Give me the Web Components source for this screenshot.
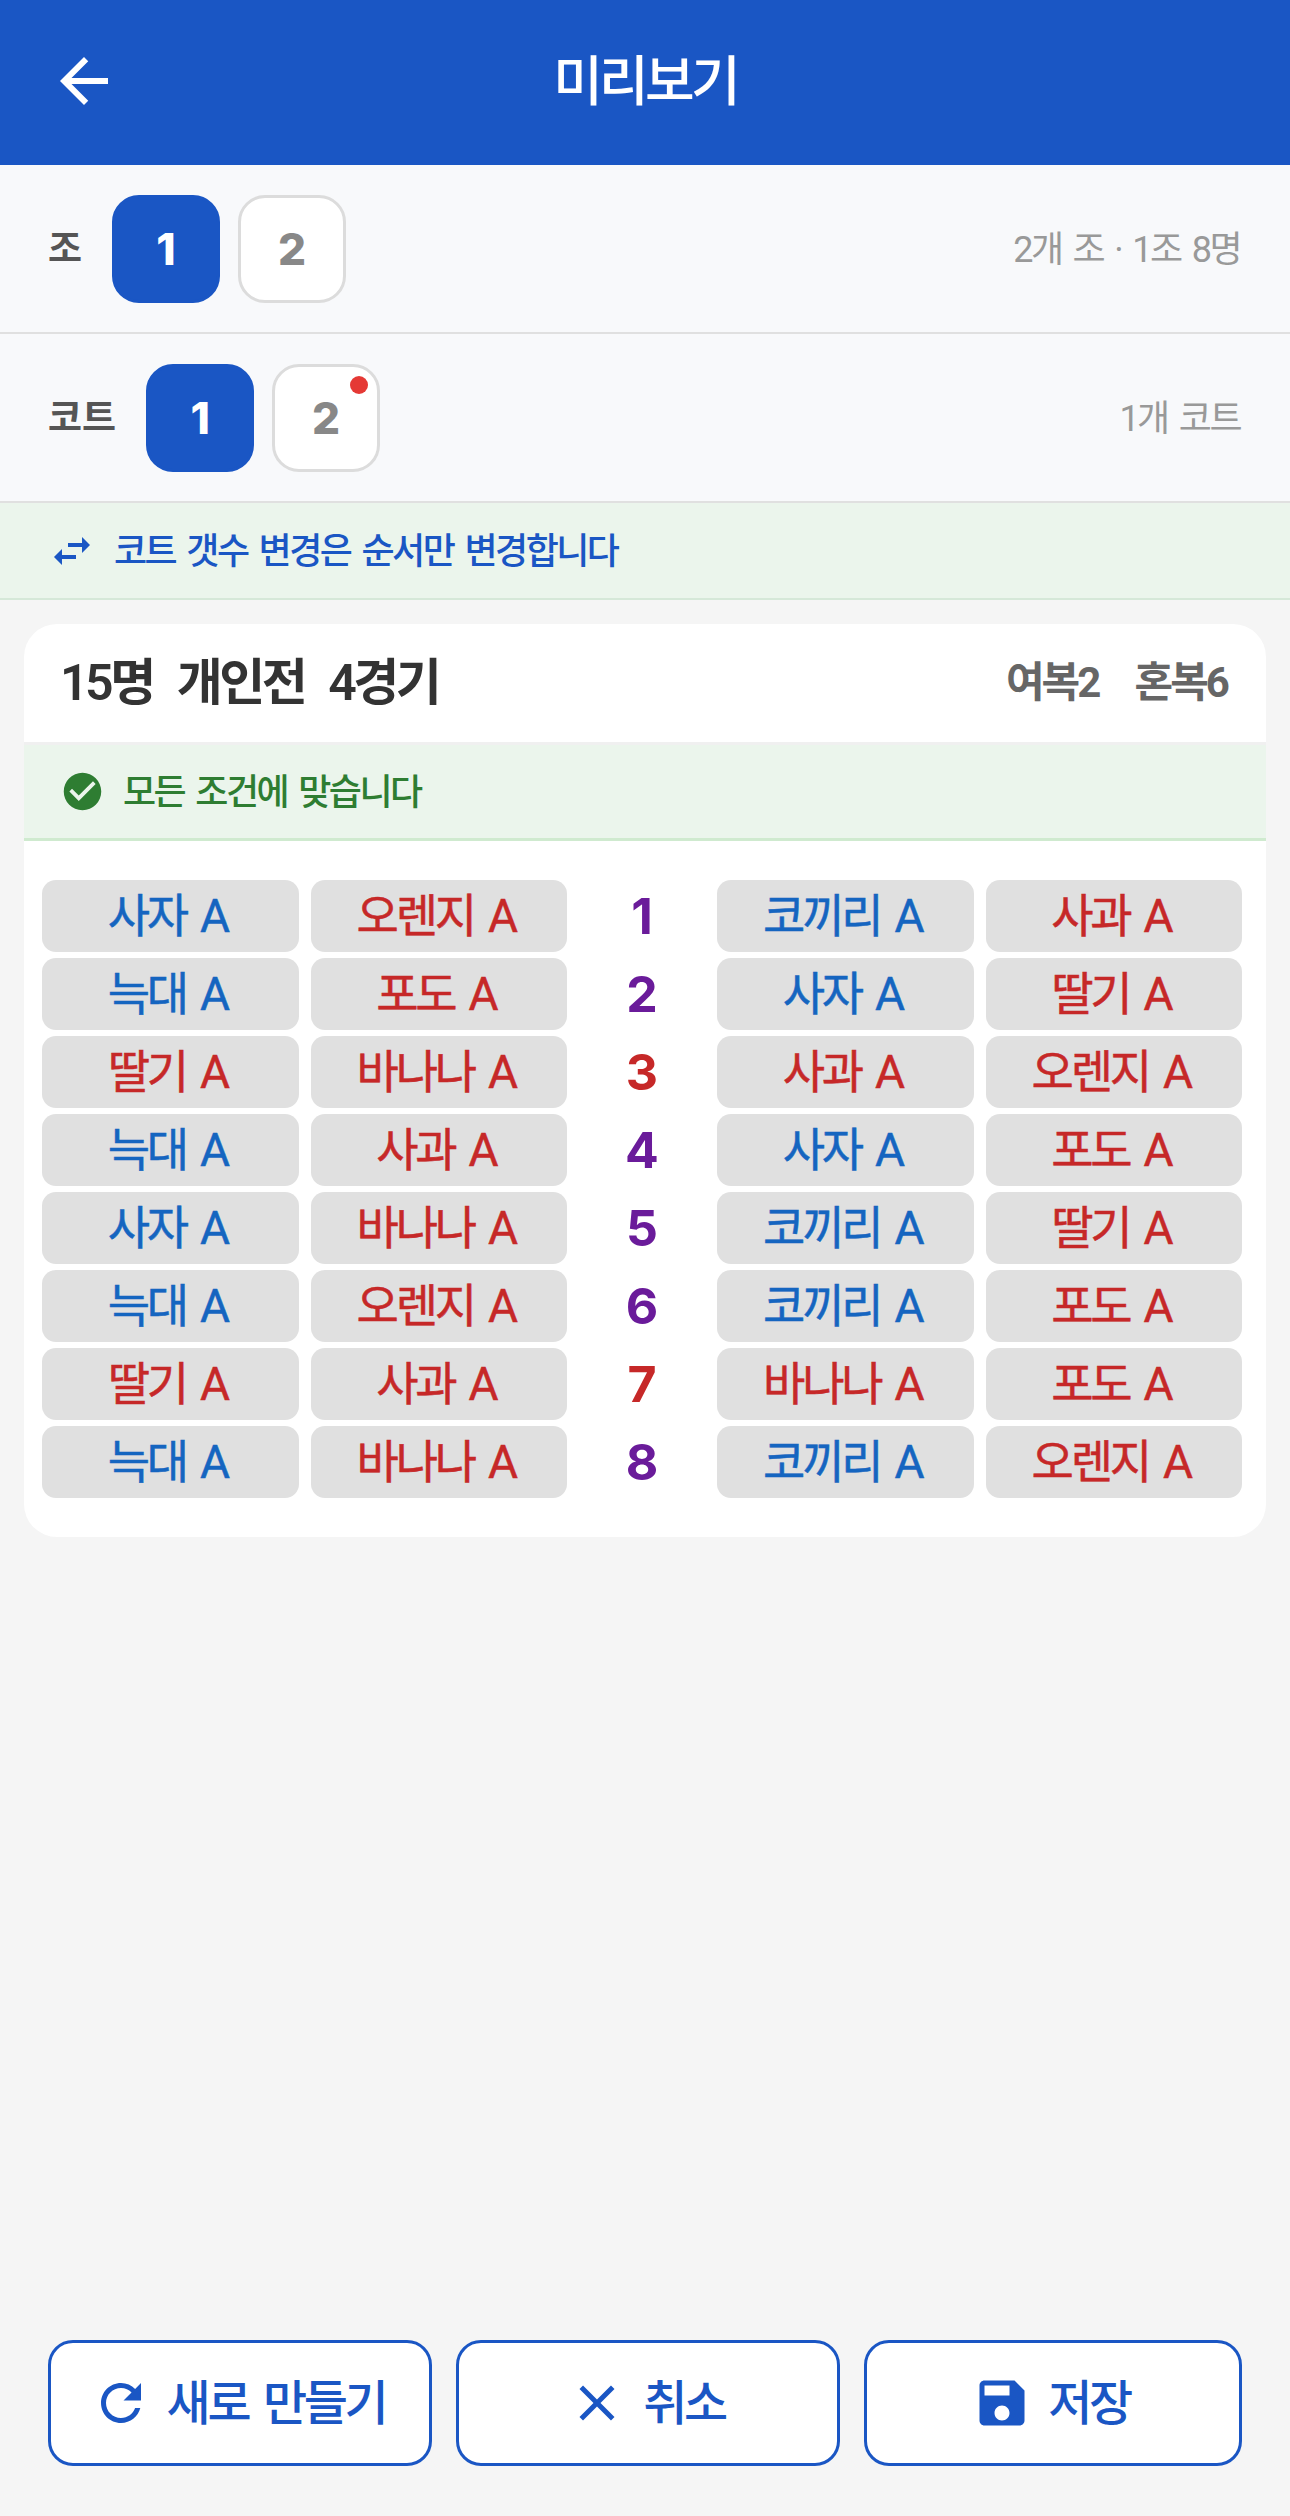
<!DOCTYPE html>
<html lang="ko"><head><meta charset="utf-8"><title>미리보기</title>
<style>
html,body{margin:0;padding:0;height:100%;}
body{font-family:Roboto,"Noto Sans CJK KR",sans-serif;background:#f5f5f5;}
</style></head><body>
<preview-app></preview-app>
<script>
const FONT='Roboto,"Noto Sans CJK KR",sans-serif';
const TIGHT='letter-spacing:-.07em;word-spacing:.13em;';
const ICONS={
 back:'M20 11H7.83l5.59-5.59L12 4l-8 8 8 8 1.41-1.41L7.83 13H20v-2z',
 swap:'M6.99 11L3 15l3.99 4v-3H14v-2H6.99v-3zM21 9l-3.99-4v3H10v2h7.01v3L21 9z',
 check:'M12 2C6.48 2 2 6.48 2 12s4.48 10 10 10 10-4.48 10-10S17.52 2 12 2zm-2 15l-5-5 1.41-1.41L10 14.17l7.59-7.59L19 8l-9 9z',
 refresh:'M17.65 6.35C16.2 4.9 14.21 4 12 4c-4.42 0-7.99 3.58-7.99 8s3.57 8 7.99 8c3.73 0 6.84-2.55 7.73-6h-2.08c-.82 2.33-3.04 4-5.65 4-3.31 0-6-2.69-6-6s2.69-6 6-6c1.66 0 3.14.69 4.22 1.78L13 11h7V4l-2.35 2.35z',
 close:'M19 6.41L17.59 5 12 10.59 6.41 5 5 6.41 10.59 12 5 17.59 6.41 19 12 13.41 17.59 19 19 17.59 13.41 12z',
 save:'M17 3H5c-1.11 0-2 .9-2 2v14c0 1.1.89 2 2 2h14c1.1 0 2-.9 2-2V7l-4-4zm-5 16c-1.66 0-3-1.34-3-3s1.34-3 3-3 3 1.34 3 3-1.34 3-3 3zm3-10H5V5h10v4z'
};
function icon(n,s,c){return `<svg width="${s}" height="${s}" viewBox="0 0 24 24" fill="${c}" style="display:block;flex:none"><path d="${ICONS[n]}"/></svg>`;}
function def(name,css,html){
  customElements.define(name,class extends HTMLElement{
    constructor(){super();const r=this.attachShadow({mode:'open'});
      r.innerHTML=`<style>${css}</style>`+(typeof html==='function'?html(this):html);}
  });
}
def('app-header',`:host{display:flex;align-items:center;justify-content:center;height:165px;background:#1a56c4;position:relative;flex:none}
 .b{position:absolute;left:48px;top:45px;width:72px;height:72px}
 h1{margin:0;font:500 54px/1 ${FONT};color:#fff;${TIGHT}}`,
 ()=>`<div class="b">${icon('back',72,'#fff')}</div><h1><slot></slot></h1>`);
def('pick-btn',`:host{display:flex;position:relative;box-sizing:border-box;width:108px;height:108px;border-radius:27px;border:3px solid #dcdcdc;background:#fff;color:#888;align-items:center;justify-content:center;font:800 44px/1 Inter,sans-serif}
 :host([active]){background:#1a56c4;border-color:#1a56c4;color:#fff}
 :host([dot])::after{content:"";position:absolute;top:9px;right:9px;width:18px;height:18px;border-radius:50%;background:#e53935}`,`<slot></slot>`);
def('pick-row',`:host{display:flex;align-items:center;box-sizing:border-box;height:169px;padding:0 50px 0 48px;background:#f8f9fb;border-bottom:2px solid #e0e0e0;gap:30px;flex:none}
 .l{font:700 37px/1 ${FONT};color:#555;padding-top:2px}
 .g{display:flex;gap:18px}
 .r{margin-left:auto;font:400 36px/1 ${FONT};color:#999;${TIGHT}padding-top:2px}`,
 h=>`<span class="l">${h.getAttribute('label')}</span><div class="g"><slot></slot></div><span class="r">${h.getAttribute('info')}</span>`);
def('info-bar',`:host{display:flex;align-items:center;box-sizing:border-box;height:97px;padding:0 48px;background:#ebf5ec;border-bottom:2px solid #d5e8d8;gap:18px;flex:none;font:500 36px/1 ${FONT};color:#1a56c4;${TIGHT}}
 span{padding-top:2px}`,
 ()=>`${icon('swap',48,'#1a56c4')}<span><slot></slot></span>`);
def('card-head',`:host{display:flex;align-items:center;justify-content:space-between;height:118px;padding:0 39px 0 36px;}
 .a{display:flex;gap:24px;font:600 50px/1 ${FONT};color:#333;letter-spacing:-.07em}
 .b{display:flex;gap:36px;font:700 42px/1 ${FONT};color:#666;${TIGHT}}`,
 h=>`<div class="a">${h.getAttribute('left').split('|').map(t=>`<span>${t}</span>`).join('')}</div><div class="b">${h.getAttribute('right').split('|').map(t=>`<span>${t}</span>`).join('')}</div>`);
def('ok-bar',`:host{display:flex;align-items:center;box-sizing:border-box;height:99px;padding:0 36px;gap:18px;background:#ebf5ec;border-top:3px solid #f0f0f0;border-bottom:3px solid #cfeacf;font:500 36px/1 ${FONT};color:#2e7d32;${TIGHT}}
 span{padding-top:2px}`,
 ()=>`${icon('check',45,'#2e7d32')}<span><slot></slot></span>`);
def('match-cell',`:host{display:flex;box-sizing:border-box;flex:1 1 0;min-width:0;height:72px;padding-right:6px;background:#e0e0e0;border-radius:14px;align-items:center;justify-content:center;font:400 46px/1 ${FONT};-webkit-text-stroke:.5px currentColor;color:#1565c0;${TIGHT}}
 :host([red]){color:#c62828}`,`<slot></slot>`);
def('match-row',`:host{display:flex;gap:12px;height:72px;align-items:center}
 .n{flex:none;width:126px;text-align:center;font:700 50px/1 Inter,sans-serif;color:#6a1b9a}
 :host([red]) .n{color:#c62828}
 .s{display:flex;flex:1 1 0;gap:12px}`,
 h=>{const c=t=>{const[v,rd]=t.split(':');return `<match-cell ${rd?'red':''}>${v}</match-cell>`};
   const [a,b]=[h.getAttribute('a').split(','),h.getAttribute('b').split(',')];
   return `<div class="s">${a.map(c).join('')}</div><div class="n">${h.getAttribute('n')}</div><div class="s">${b.map(c).join('')}</div>`;});
def('match-card',`:host{display:block;margin:24px 24px 0;background:#fff;border-radius:33px;overflow:hidden}
 .g{display:flex;flex-direction:column;gap:6px;padding:39px 24px 39px 18px}`,
 ()=>`<slot name="top"></slot><div class="g"><slot></slot></div>`);
def('action-btn',`:host{display:flex;box-sizing:border-box;height:126px;padding-right:4px;border:3px solid #1a56c4;border-radius:25px;background:#fff;color:#1a56c4;align-items:center;justify-content:center;gap:16px;font:500 48px/1 ${FONT};${TIGHT}}
 span{padding-top:2px}`,
 h=>`${icon(h.getAttribute('icon'),60,'#1a56c4')}<span><slot></slot></span>`);
def('action-bar',`:host{display:grid;grid-template-columns:384fr 384fr 378fr;gap:24px;padding:0 48px 50px;margin-top:auto;flex:none}`,`<slot></slot>`);
const rows=[
 ['사자 A,오렌지 A:r','1','코끼리 A,사과 A:r'],
 ['늑대 A,포도 A:r','2','사자 A,딸기 A:r'],
 ['딸기 A:r,바나나 A:r','3','사과 A:r,오렌지 A:r',1],
 ['늑대 A,사과 A:r','4','사자 A,포도 A:r'],
 ['사자 A,바나나 A:r','5','코끼리 A,딸기 A:r'],
 ['늑대 A,오렌지 A:r','6','코끼리 A,포도 A:r'],
 ['딸기 A:r,사과 A:r','7','바나나 A:r,포도 A:r',1],
 ['늑대 A,바나나 A:r','8','코끼리 A,오렌지 A:r']];
def('preview-app',`:host{display:flex;flex-direction:column;height:2516px;background:#f5f5f5}`,
 ()=>`<app-header>미리보기</app-header>
 <pick-row label="조" info="2개 조 · 1조 8명"><pick-btn active>1</pick-btn><pick-btn>2</pick-btn></pick-row>
 <pick-row label="코트" info="1개 코트"><pick-btn active>1</pick-btn><pick-btn dot>2</pick-btn></pick-row>
 <info-bar>코트 갯수 변경은 순서만 변경합니다</info-bar>
 <match-card><card-head slot="top" left="15명|개인전|4경기" right="여복2|혼복6"></card-head><ok-bar slot="top">모든 조건에 맞습니다</ok-bar>
 ${rows.map(r=>`<match-row a="${r[0]}" n="${r[1]}" b="${r[2]}" ${r[3]?'red':''}></match-row>`).join('')}</match-card>
 <action-bar><action-btn icon="refresh">새로 만들기</action-btn><action-btn icon="close">취소</action-btn><action-btn icon="save">저장</action-btn></action-bar>`);
</script></body></html>
